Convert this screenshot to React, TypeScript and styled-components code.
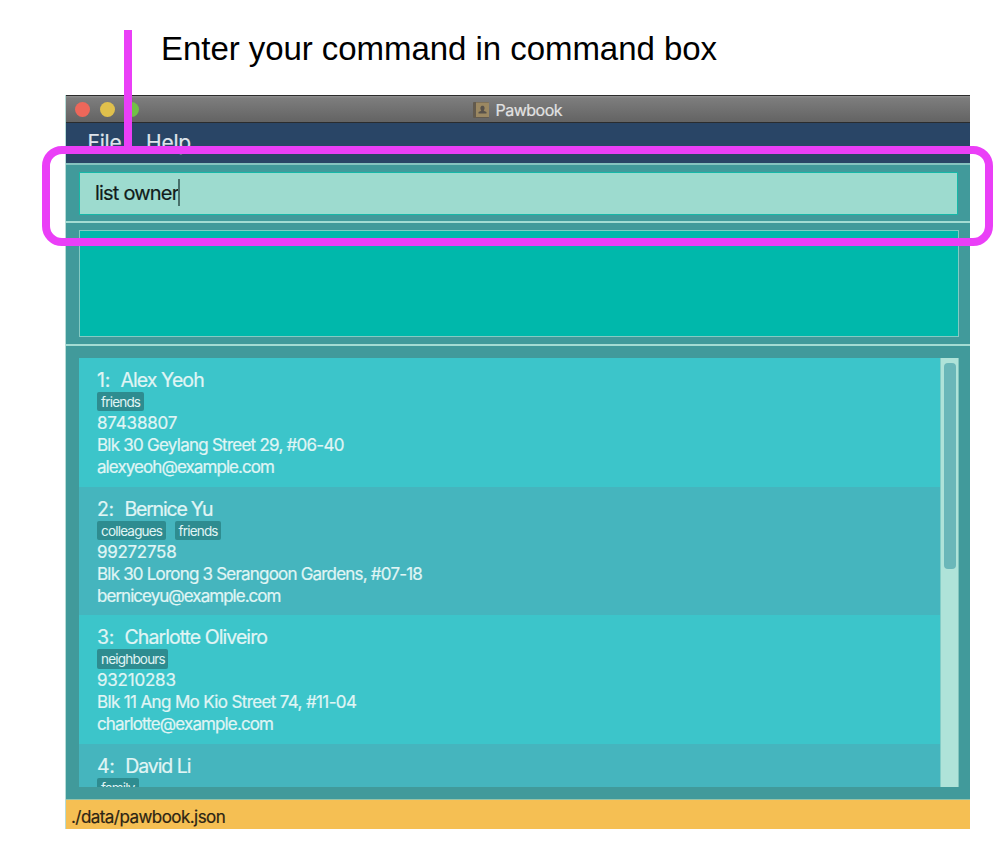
import React from "react";
import styled, { createGlobalStyle } from "styled-components";

const GlobalStyle = createGlobalStyle`
  * { box-sizing: border-box; }
  body { margin: 0; background: #fff; font-family: Inter, "Liberation Sans", sans-serif; }
`;

const Page = styled.main`
  position: relative;
  width: 1004px;
  height: 858px;
  overflow: hidden;
  padding: 27px 0 0 66px;
`;

const Caption = styled.h1`
  margin: 0 0 24px 95px;
  height: 44px;
  font: 400 33px/44px "Liberation Sans", Arial, sans-serif;
  letter-spacing: -0.05px;
  color: #000;
  white-space: nowrap;
`;

const Window = styled.section`
  width: 904px;
  height: 734px;
  display: flex;
  flex-direction: column;
  background: #419a9b;
  box-shadow: -1px 0 0 #b5dcd7;
  -webkit-text-stroke: 0.2px currentColor;
`;

const TitleBar = styled.header`
  flex: 0 0 28px;
  display: flex;
  align-items: center;
  padding: 1px 0 0 9px;
  gap: 9px;
  border-top: 1px solid #2b2b2b;
  border-bottom: 1px solid #2a2c2e;
  background: linear-gradient(#929292 0, #7d7d7d 2px, #636363 100%);
`;

const Light = styled.i<{ $color: string }>`
  width: 15px;
  height: 15px;
  margin-right: 0.5px;
  border-radius: 50%;
  background: ${(p) => p.$color};
`;

const Title = styled.div`
  display: flex;
  align-items: center;
  gap: 7px;
  margin-left: 324px;
  color: #e2e2e2;
  font-size: 16px;
  line-height: 20px;
`;

const TitleText = styled.span`
  letter-spacing: -0.5px;
`;

const MenuBar = styled.nav`
  flex: 0 0 40px;
  display: flex;
  gap: 24.5px;
  padding: 7px 0 0 21.5px;
  background: #294566;
  color: #dfe4ea;
  font-size: 21px;
  line-height: 26px;
`;

const MenuItem = styled.span`
  letter-spacing: -0.2px;
`;

const CommandPane = styled.div`
  flex: 0 0 58px;
  padding: 6.5px 12px 7px 13px;
  border-top: 2px solid #85c3bf;
`;

const CommandBox = styled.div`
  height: 43px;
  display: flex;
  align-items: center;
  padding: 0 0 1px 15px;
  border: 1px solid #16b8a8;
  background: #9ddbcf;
  color: #111c1a;
  font-size: 20px;
  letter-spacing: -0.8px;
`;

const Caret = styled.i`
  width: 1.5px;
  height: 27px;
  background: #48716b;
`;

const ResultPane = styled.div`
  flex: 0 0 124px;
  margin-top: -1px;
  padding: 7px 11px 7px 13px;
  border-top: 2px solid #a4dcd3;
`;

const ResultBox = styled.div`
  height: 107px;
  border: 1px solid #84cac3;
  background: #00b8ab;
`;

const ListPane = styled.div`
  flex: 1;
  min-height: 0;
  margin-top: -1px;
  padding: 12px 11px 12px 13px;
  border-top: 2px solid #a4dcd3;
  border-bottom: 1px solid #97c3a8;
`;

const ListView = styled.div`
  display: flex;
  height: 429px;
  overflow: hidden;
`;

const Rows = styled.div`
  flex: 1;
`;

const Row = styled.article<{ $odd: boolean }>`
  height: 128.7px;
  padding: 10px 0 0 18px;
  background: ${(p) => (p.$odd ? "#3cc5ca" : "#45b5be")};
  color: #e0f5f5;

  &:first-child {
    height: 129px;
  }
`;

const Name = styled.h2<{ $spacing: number }>`
  display: flex;
  gap: 10.5px;
  margin: 0;
  font-size: 19.5px;
  font-weight: 400;
  line-height: 24px;
  letter-spacing: ${(p) => p.$spacing}px;
`;

const Index = styled.span`
  letter-spacing: -0.3px;
`;

const Tags = styled.div`
  display: flex;
  gap: 8.5px;
  height: 20px;
`;

const Tag = styled.span<{ $width: number }>`
  width: ${(p) => p.$width}px;
  height: 19.5px;
  padding-left: 4px;
  border-radius: 2px;
  background: #2e8c90;
  font-size: 13.5px;
  line-height: 20px;
  letter-spacing: -0.8px;
  white-space: nowrap;
  -webkit-text-stroke: 0;
`;

const Detail = styled.p<{ $spacing: number }>`
  margin: 0;
  font-size: 17px;
  line-height: 22px;
  letter-spacing: ${(p) => p.$spacing}px;
  white-space: nowrap;
`;

const ScrollTrack = styled.div`
  width: 19px;
  padding: 5px 3px 0 4px;
  border-left: 1px solid #82cdc8;
  border-right: 1px solid #82c5be;
  background: #afe3d9;
`;

const ScrollThumb = styled.div`
  width: 12px;
  margin-left: -1px;
  height: 206px;
  border-radius: 4px;
  background: #6ab7b9;
`;

const StatusBar = styled.footer`
  flex: 0 0 29px;
  padding: 5px 0 0 5px;
  background: #f5bf53;
  color: #2c2414;
  font-size: 17px;
  line-height: 24px;
  letter-spacing: -0.55px;
`;

const Highlight = styled.div`
  position: absolute;
  left: 42px;
  top: 146px;
  width: 951px;
  height: 100px;
  border: 8px solid #ea3ff7;
  border-radius: 20px;
`;

const Pointer = styled.div`
  position: absolute;
  left: 124px;
  top: 30px;
  width: 8px;
  height: 120px;
  background: #ea3ff7;
`;

type Owner = {
  name: string;
  nameSpacing: number;
  tags: { label: string; width: number }[];
  details: { text: string; spacing: number }[];
};

const owners: Owner[] = [
  {
    name: "Alex Yeoh",
    nameSpacing: -0.92,
    tags: [{ label: "friends", width: 47 }],
    details: [
      { text: "87438807", spacing: -0.18 },
      { text: "Blk 30 Geylang Street 29, #06-40", spacing: -0.75 },
      { text: "alexyeoh@example.com", spacing: -0.93 },
    ],
  },
  {
    name: "Bernice Yu",
    nameSpacing: -1.2,
    tags: [
      { label: "colleagues", width: 69 },
      { label: "friends", width: 46.5 },
    ],
    details: [
      { text: "99272758", spacing: -0.3 },
      { text: "Blk 30 Lorong 3 Serangoon Gardens, #07-18", spacing: -0.8 },
      { text: "berniceyu@example.com", spacing: -0.97 },
    ],
  },
  {
    name: "Charlotte Oliveiro",
    nameSpacing: -0.95,
    tags: [{ label: "neighbours", width: 71 }],
    details: [
      { text: "93210283", spacing: -0.22 },
      { text: "Blk 11 Ang Mo Kio Street 74, #11-04", spacing: -0.64 },
      { text: "charlotte@example.com", spacing: -0.88 },
    ],
  },
  { name: "David Li", nameSpacing: -1.05, tags: [{ label: "family", width: 42 }], details: [] },
];

const ContactIcon = () => (
  <svg width="16" height="16" viewBox="0 0 16 16">
    <rect width="16" height="16" rx="1" fill="#625a4e" />
    <rect x="3" y="0.5" width="13" height="14.5" fill="#9b8862" />
    <path d="M5.5 11.5v-1.6l2.8-1.2C6.7 6.5 7.3 3.8 9.5 3.8s2.8 2.7 1.2 4.9l2.8 1.2v1.6z" fill="#57514a" />
  </svg>
);

export default function App() {
  return (
    <Page>
      <GlobalStyle />
      <Caption>Enter your command in command box</Caption>
      <Window>
        <TitleBar>
          <Light $color="#ed675a" />
          <Light $color="#e0c04c" />
          <Light $color="#72bf47" />
          <Title>
            <ContactIcon />
            <TitleText>Pawbook</TitleText>
          </Title>
        </TitleBar>
        <MenuBar>
          <MenuItem>File</MenuItem>
          <MenuItem>Help</MenuItem>
        </MenuBar>
        <CommandPane>
          <CommandBox>
            list owner
            <Caret />
          </CommandBox>
        </CommandPane>
        <ResultPane>
          <ResultBox />
        </ResultPane>
        <ListPane>
          <ListView>
            <Rows>
              {owners.map((o, i) => (
                <Row key={o.name} $odd={i % 2 === 0}>
                  <Name $spacing={o.nameSpacing}>
                    <Index>{i + 1}:</Index>
                    <span>{o.name}</span>
                  </Name>
                  <Tags>
                    {o.tags.map((t) => (
                      <Tag key={t.label} $width={t.width}>
                        {t.label}
                      </Tag>
                    ))}
                  </Tags>
                  {o.details.map((d) => (
                    <Detail key={d.text} $spacing={d.spacing}>
                      {d.text}
                    </Detail>
                  ))}
                </Row>
              ))}
            </Rows>
            <ScrollTrack>
              <ScrollThumb />
            </ScrollTrack>
          </ListView>
        </ListPane>
        <StatusBar>./data/pawbook.json</StatusBar>
      </Window>
      <Highlight />
      <Pointer />
    </Page>
  );
}
